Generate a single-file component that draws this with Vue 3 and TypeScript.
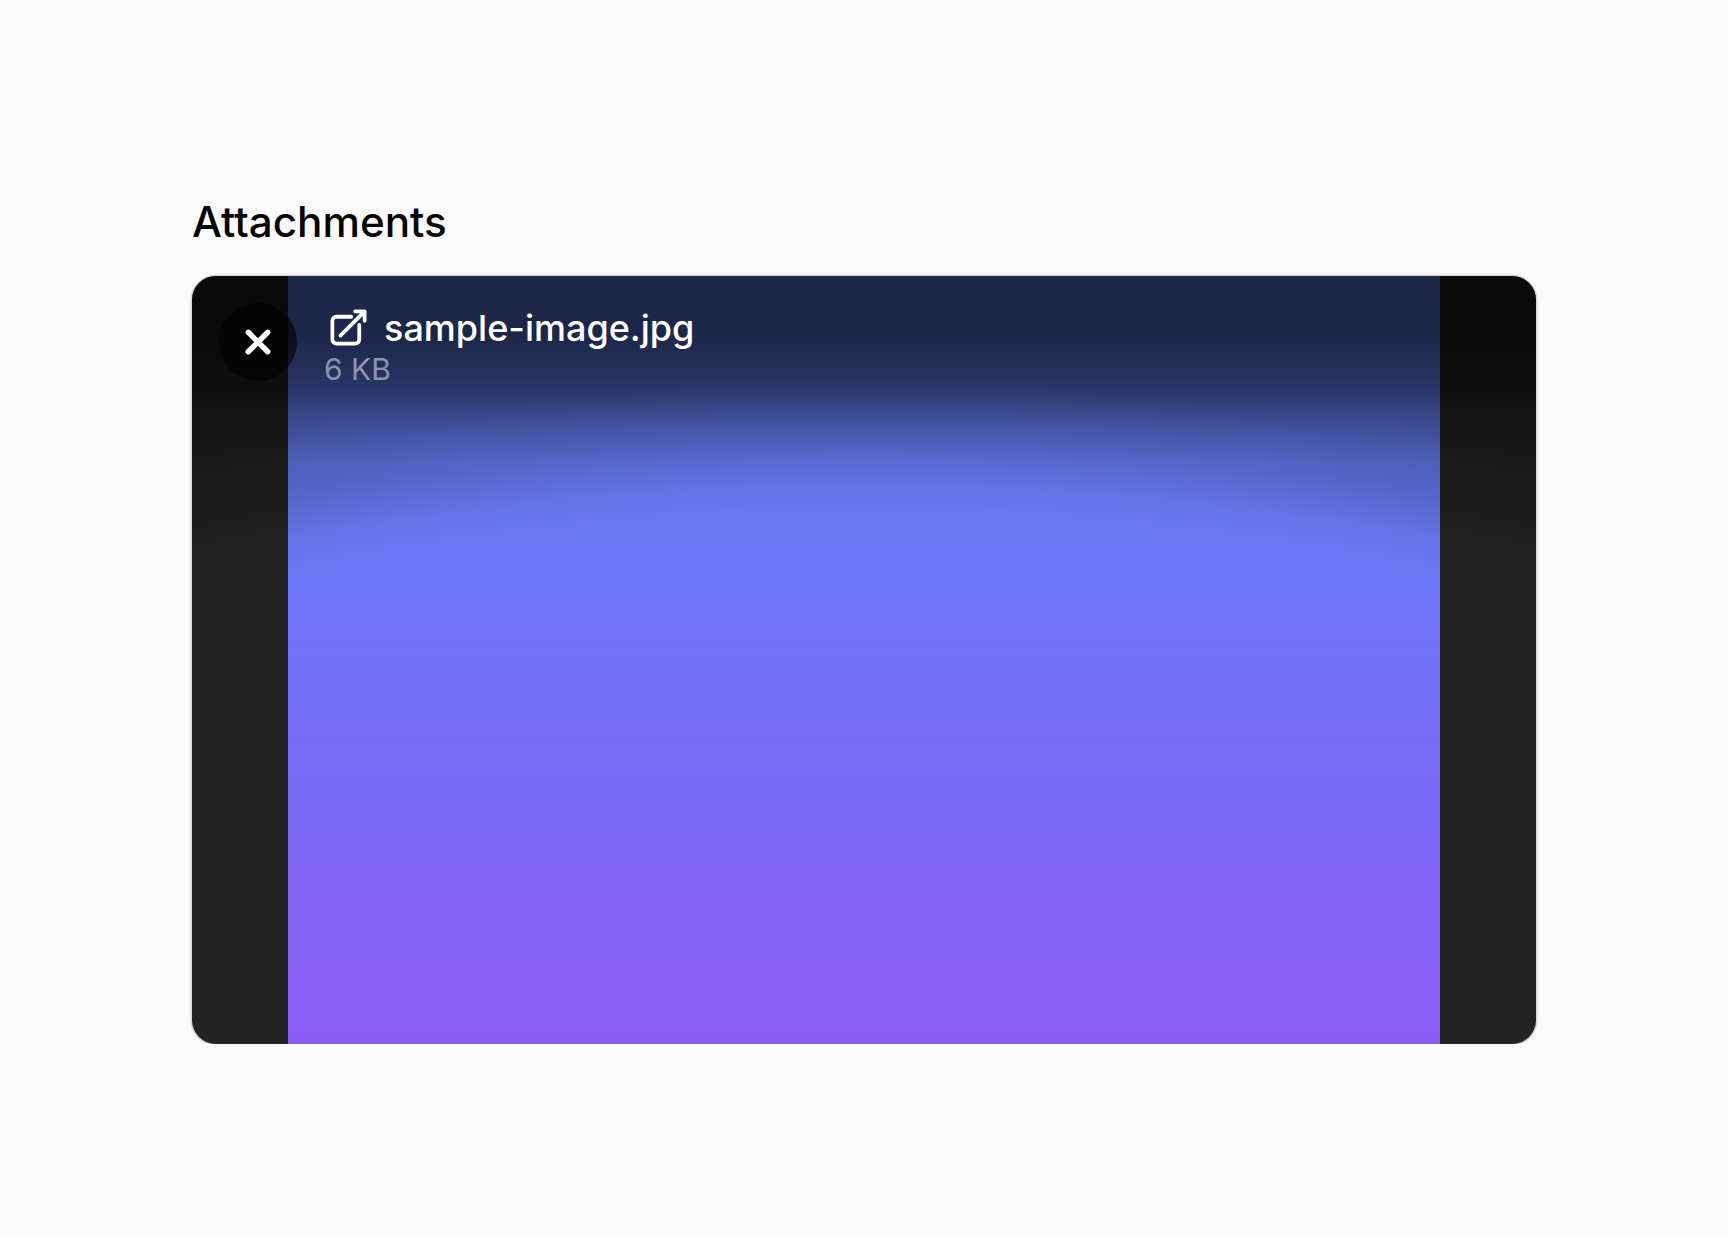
<script setup lang="ts">
const file = { name: 'sample-image.jpg', size: '6 KB' }
</script>

<template>
  <main class="page">
    <h2 class="title">Attachments</h2>
    <div class="viewer">
      <div class="image"></div>
      <div class="shade"></div>
      <button class="close" aria-label="Close">
        <svg viewBox="0 0 24 24" width="36" height="36" fill="none" stroke="#fff" stroke-width="3.6" stroke-linecap="round">
          <path d="M5.5 5.5l13 13M18.5 5.5l-13 13" />
        </svg>
      </button>
      <div class="info">
        <a class="name">
          <svg class="open-icon" viewBox="0 0 24 24" width="43" height="43" fill="none" stroke="#fff" stroke-width="2.1" stroke-linecap="round" stroke-linejoin="round">
            <path d="M13.5 6H5.25A2.25 2.25 0 0 0 3 8.25v10.5A2.25 2.25 0 0 0 5.25 21h10.5A2.25 2.25 0 0 0 18 18.75V10.5m-10.5 6L21 3m0 0h-5.25M21 3v5.25" />
          </svg>
          <span>{{ file.name }}</span>
        </a>
        <div class="size">{{ file.size }}</div>
      </div>
    </div>
  </main>
</template>

<style scoped>
.page {
  width: 1344px;
  margin: 0 auto;
  padding-top: 196px;
  font-family: Inter, "Liberation Sans", sans-serif;
}

.title {
  margin: 0 0 28px;
  font-size: 42.2px;
  line-height: 52px;
  font-weight: 450;
  color: #050505;
}

.viewer {
  position: relative;
  height: 768px;
  display: flex;
  justify-content: center;
  overflow: hidden;
  border-radius: 24px;
  background: #222;
  box-shadow: 0 0 0 1.5px rgba(0, 0, 0, 0.12), 0 2px 5px rgba(0, 0, 0, 0.07);
}

.image {
  width: 1152px;
  height: 100%;
  background: linear-gradient(180deg, #5c82ee 0%, #6a78f4 35%, #8b5cf6 100%);
}

.shade {
  position: absolute;
  inset: 0;
  background:
    linear-gradient(
      180deg,
      rgba(0, 0, 0, 0.57) 0,
      rgba(0, 0, 0, 0.57) 60px,
      rgba(0, 0, 0, 0.42) 105px,
      rgba(0, 0, 0, 0.12) 150px,
      rgba(0, 0, 0, 0) 185px
    ),
    radial-gradient(
      ellipse 1300px 500px at 50% 700px,
      rgba(0, 0, 0, 0) 92%,
      rgba(0, 0, 0, 0.05) 98%,
      rgba(0, 0, 0, 0.18) 106%,
      rgba(0, 0, 0, 0.3) 118%
    );
  pointer-events: none;
}

.close {
  position: absolute;
  left: 27px;
  top: 27px;
  width: 78px;
  height: 78px;
  display: flex;
  align-items: center;
  justify-content: center;
  padding: 0;
  border: none;
  border-radius: 50%;
  background: rgba(0, 0, 0, 0.6);
  cursor: pointer;
}

.info {
  position: absolute;
  left: 132px;
  top: 30px;
  color: #fff;
}

.name {
  display: flex;
  align-items: center;
  gap: 14px;
  padding-left: 3px;
  font-size: 36px;
  font-weight: 500;
  line-height: 44px;
}

.open-icon {
  margin-top: -2px;
}

.size {
  margin-top: 1px;
  font-size: 30px;
  font-weight: 440;
  line-height: 37px;
  color: #8b93b2;
}
</style>

<style>
html,
body {
  background: #fafafa;
}
</style>
